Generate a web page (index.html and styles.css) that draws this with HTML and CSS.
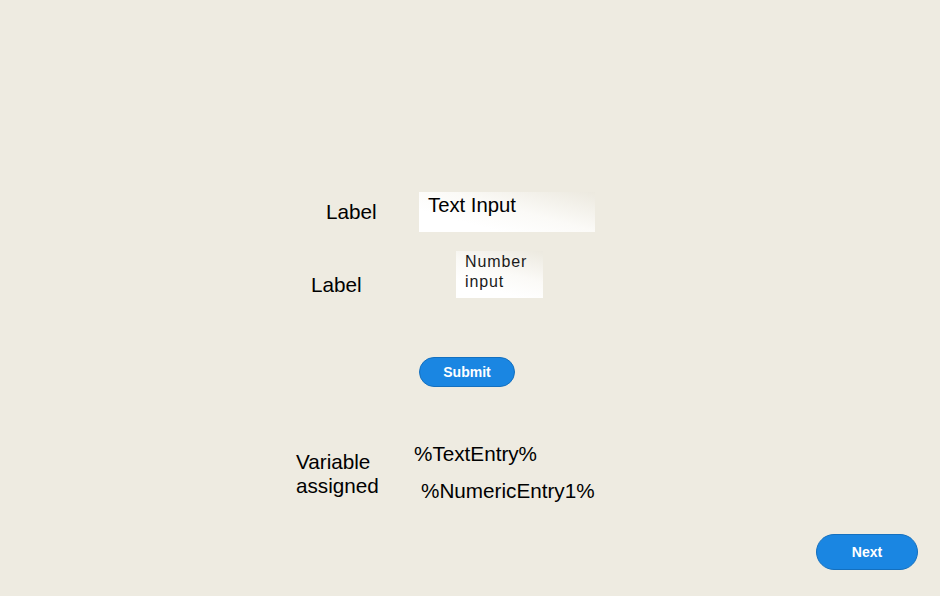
FILE: index.html
```html
<!DOCTYPE html>
<html>
<head>
<meta charset="utf-8">
<link rel="stylesheet" href="styles.css">
</head>
<body>
<div class="canvas">
  <div class="row row-text">
    <span class="label label-1">Label</span>
    <div class="field field-text">Text Input</div>
  </div>
  <div class="row row-number">
    <span class="label label-2">Label</span>
    <div class="field field-number">Number<br>input</div>
  </div>
  <div class="row row-submit">
    <button class="btn btn-submit">Submit</button>
  </div>
  <div class="row row-vars">
    <span class="vars-label">Variable<br>assigned</span>
    <div class="vars-values">
      <span class="var var-1">%TextEntry%</span>
      <span class="var var-2">%NumericEntry1%</span>
    </div>
  </div>
  <div class="row row-next">
    <button class="btn btn-next">Next</button>
  </div>
</div>
</body>
</html>
```

FILE: styles.css
```css
html, body {
  margin: 0;
  padding: 0;
}
body {
  width: 940px;
  height: 596px;
  background: #eeebe1;
  font-family: "Liberation Sans", Arial, sans-serif;
  color: #000;
  overflow: hidden;
}
.canvas {
  display: flex;
  flex-direction: column;
  padding-top: 192px;
}
.row {
  display: flex;
  align-items: flex-start;
  flex-shrink: 0;
}
.label {
  font-size: 20.7px;
  line-height: 24px;
  flex-shrink: 0;
}
.row-text {
  height: 40px;
}
.label-1 {
  margin-left: 326px;
  width: 93px;
  margin-top: 8px;
}
.field {
  background: linear-gradient(195deg, #ece9df 0%, #fbfaf7 45%, #ffffff 75%);
  box-sizing: border-box;
  flex-shrink: 0;
}
.field-text {
  width: 176px;
  height: 40px;
  font-size: 20.3px;
  line-height: 24px;
  padding: 1px 0 0 9px;
}
.row-number {
  margin-top: 19px;
  height: 47px;
}
.label-2 {
  margin-left: 311px;
  width: 145px;
  margin-top: 22px;
}
.field-number {
  width: 87px;
  height: 47px;
  font-size: 16px;
  line-height: 20px;
  letter-spacing: 0.9px;
  padding: 1px 0 0 9px;
  color: #1a1a1a;
}
.row-submit {
  margin-top: 59px;
}
.btn {
  font-family: "Liberation Sans", Arial, sans-serif;
  font-weight: bold;
  font-size: 14px;
  color: #fff;
  background: #1a86e2;
  border: 1px solid #1470bf;
  border-radius: 20px;
  padding: 0;
  box-sizing: border-box;
  flex-shrink: 0;
}
.btn-submit {
  margin-left: 419px;
  width: 96px;
  height: 30px;
}
.row-vars {
  margin-top: 54px;
}
.vars-label {
  margin-left: 296px;
  width: 118px;
  margin-top: 9px;
  font-size: 20.7px;
  line-height: 24px;
  flex-shrink: 0;
}
.vars-values {
  display: flex;
  flex-direction: column;
  align-items: flex-start;
}
.var {
  font-size: 20.7px;
  line-height: 24px;
}
.var-1 {
  margin-top: 1px;
}
.var-2 {
  margin-left: 7px;
  margin-top: 13px;
}
.row-next {
  margin-top: 31px;
}
.btn-next {
  margin-left: 816px;
  width: 102px;
  height: 36px;
}
```
